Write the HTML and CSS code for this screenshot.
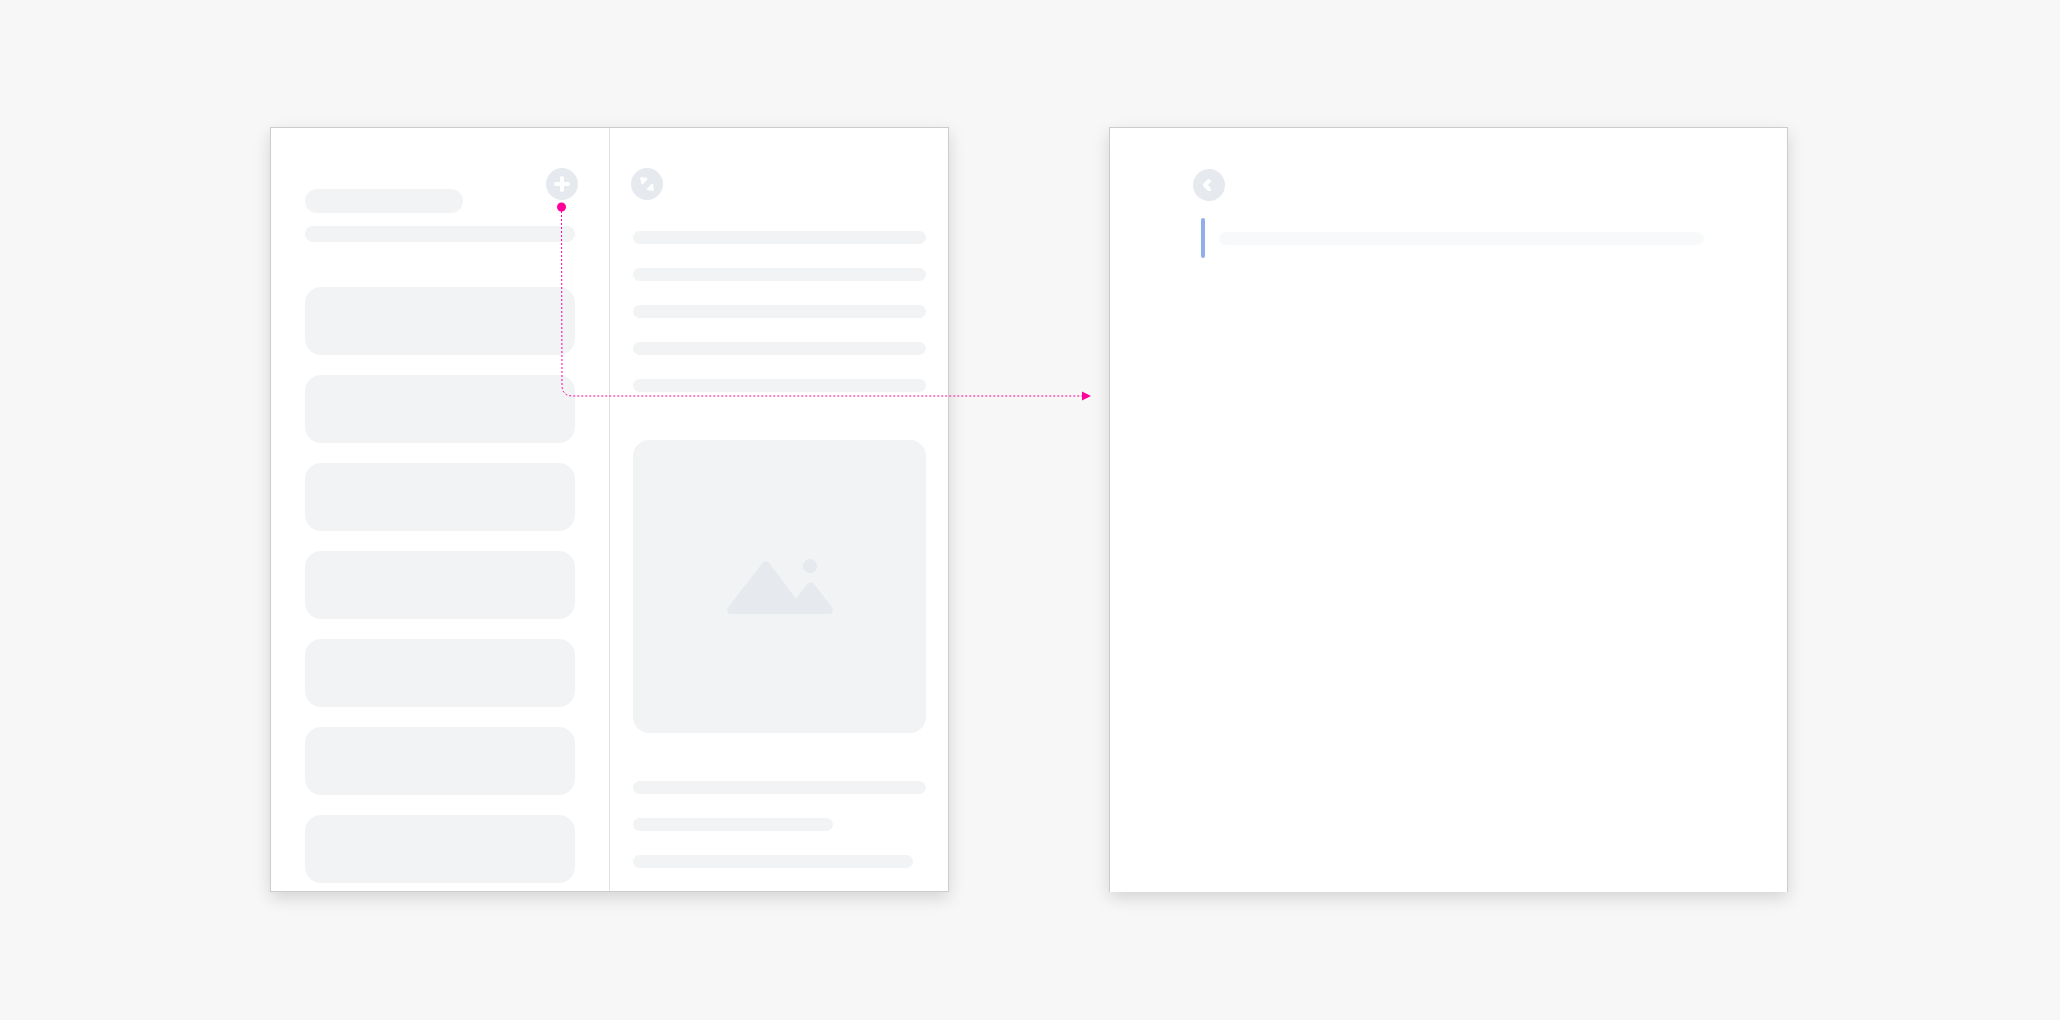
FILE: index.html
```html
<!DOCTYPE html>
<html lang="en">

<head>
    <meta charset="UTF-8">
    <meta name="viewport" content="width=device-width, initial-scale=1.0">
    <title>New Note Flow</title>
    <link rel="stylesheet" href="styles.css">
</head>

<body>
    <main class="flow">
        <!-- List and detail screen -->
        <section class="screen split-screen">
            <div class="list-pane">
                <div class="list-header">
                    <div class="bar title-bar"></div>
                    <button type="button" class="round-button" aria-label="Add">
                        <svg width="32" height="32" viewBox="0 0 32 32">
                            <path d="M16 10V22M10 16H22" stroke-width="4" />
                        </svg>
                    </button>
                </div>
                <div class="list-body">
                    <div class="bar search-bar"></div>
                    <ul class="items">
                        <li class="item"></li>
                        <li class="item"></li>
                        <li class="item"></li>
                        <li class="item"></li>
                        <li class="item"></li>
                        <li class="item"></li>
                        <li class="item"></li>
                    </ul>
                </div>
            </div>

            <div class="divider"></div>

            <div class="detail-pane">
                <div class="detail-toolbar">
                    <button type="button" class="round-button" aria-label="Expand">
                        <svg width="32" height="32" viewBox="0 0 32 32">
                            <path class="solid" d="M10.2 10.2L15.4 10.8L11.3 15.4ZM21.3 16.6L21.8 21.8L16.6 21.2Z" stroke-width="2" />
                        </svg>
                    </button>
                </div>
                <div class="article">
                    <div class="lines">
                        <div class="bar line"></div>
                        <div class="bar line"></div>
                        <div class="bar line"></div>
                        <div class="bar line"></div>
                        <div class="bar line"></div>
                    </div>
                    <div class="picture">
                        <svg width="106" height="55" viewBox="0 0 106 55">
                            <path d="M4 55C0.3 55 -1 51.4 1.2 48.3L35.3 4.2C37 2 40.6 2 42.3 4.2L69 39.7L80.3 25Q83.7 21.4 87 25L105 48.6C107 51.6 105.6 55 102 55Z" />
                            <circle cx="83" cy="7" r="7" />
                        </svg>
                    </div>
                    <div class="lines">
                        <div class="bar line"></div>
                        <div class="bar line line-short"></div>
                        <div class="bar line line-long"></div>
                    </div>
                </div>
            </div>

            <!-- Arrow from the add button to the editor -->
            <svg class="connector" width="536" height="206" viewBox="0 0 536 206">
                <circle cx="5.5" cy="9" r="4.5" />
                <path class="dots" d="M5.5 13L6 187Q6 198 17 198H527" />
                <path d="M526 193.5L535 198L526 202.5Z" />
            </svg>
        </section>

        <!-- Editor screen -->
        <section class="screen editor-screen">
            <button type="button" class="round-button" aria-label="Back">
                <svg width="32" height="32" viewBox="0 0 32 32">
                    <path d="M16 12L12 16L16 20" stroke-width="4" />
                </svg>
            </button>
            <div class="editor-row">
                <div class="caret"></div>
                <div class="bar line placeholder"></div>
            </div>
        </section>
    </main>
</body>

</html>
```
FILE: styles.css
```css
* {
    box-sizing: border-box;
}

body {
    font-family: "Liberation Sans", Arial, sans-serif;
    margin: 0;
    background-color: #f7f7f7;
}

.flow {
    display: grid;
    grid-template-columns: 270fr 679fr 160fr 679fr 272fr;
    padding: 127px 0;
}

.screen {
    background-color: white;
    border: 1px solid #cccccc;
    box-shadow: 0 6px 16px rgba(0, 0, 0, 0.14);
}

.split-screen {
    position: relative;
    display: grid;
    grid-column: 2;
    grid-template-columns: 1fr 1px 1fr;
}

.divider {
    background-color: #e2e2e2;
}

.bar {
    background-color: #f1f3f5;
    border-radius: 12px;
}

.round-button {
    display: block;
    width: 32px;
    height: 32px;
    padding: 0;
    border: none;
    border-radius: 50%;
    background-color: #e6e9ee;
    cursor: pointer;
}

.round-button svg {
    display: block;
}

.round-button path {
    fill: none;
    stroke: white;
    stroke-linecap: round;
    stroke-linejoin: round;
}

.round-button .solid {
    fill: white;
}

/* List pane */
.list-header {
    display: flex;
    justify-content: space-between;
    height: 85px;
    padding: 40px 31px 0 34px;
}

.title-bar {
    align-self: flex-end;
    width: 158px;
    height: 24px;
}

.list-body {
    padding: 13px 34px 8px;
}

.search-bar {
    height: 16px;
}

.items {
    display: grid;
    gap: 20px;
    list-style-type: none;
    margin: 45px 0 0;
    padding: 0;
}

.item {
    height: 68px;
    border-radius: 16px;
    background-color: #f1f3f5;
}

/* Detail pane */
.detail-toolbar {
    padding: 40px 21px 0;
}

.article {
    display: grid;
    gap: 48px;
    padding: 31px 22px 23px 23px;
}

.lines {
    display: grid;
    gap: 24px;
}

.line {
    height: 13px;
}

.line-short {
    width: 200px;
}

.line-long {
    width: 280px;
}

.picture {
    display: flex;
    align-items: center;
    justify-content: center;
    aspect-ratio: 1;
    border-radius: 16px;
    background-color: #f1f3f5;
}

.picture svg {
    fill: #e6e9ee;
}

/* Connector */
.connector {
    position: absolute;
    top: 70px;
    left: 285px;
    z-index: 1;
    fill: #ff0099;
    pointer-events: none;
}

.connector .dots {
    fill: none;
    stroke: #ff0099;
    stroke-width: 1;
    stroke-dasharray: 2 2;
}

/* Editor */
.editor-screen {
    grid-column: 4;
    border-bottom: none;
    padding: 41px 83px;
}

.editor-row {
    display: flex;
    align-items: center;
    gap: 14px;
    margin-top: 17px;
    padding-left: 8px;
}

.caret {
    width: 4px;
    height: 40px;
    border-radius: 2px;
    background-color: #92aeea;
}

.placeholder {
    flex: 1;
    background-color: #f7f9fb;
}
```
